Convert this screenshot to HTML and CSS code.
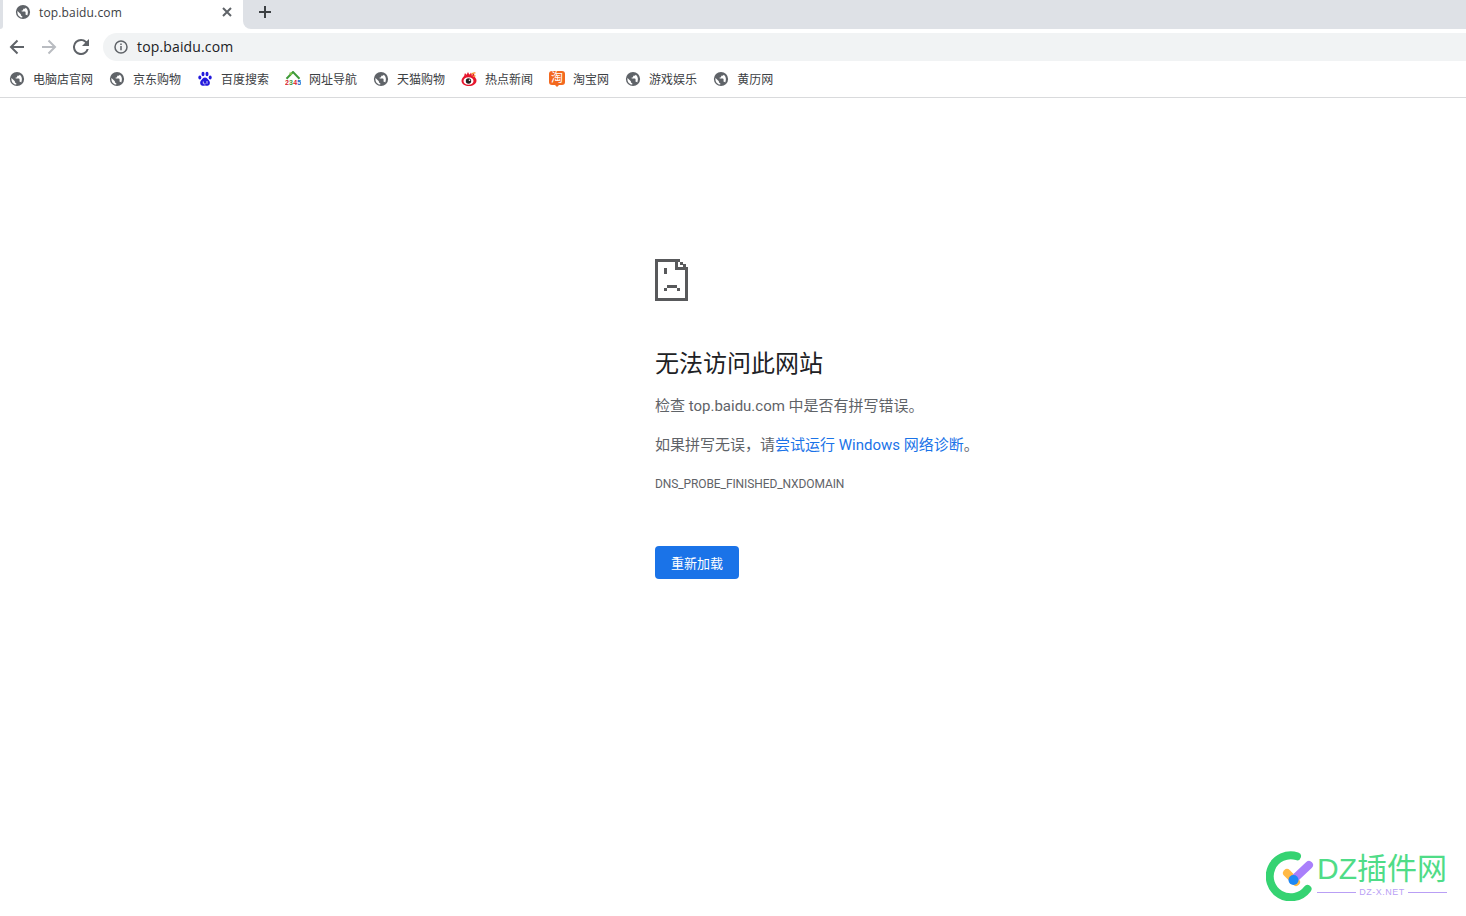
FILE: index.html
```html
<!DOCTYPE html>
<html lang="zh-CN">
<head>
<meta charset="UTF-8">
<meta name="viewport" content="width=device-width, initial-scale=1.0">
<title>top.baidu.com</title>
<link rel="stylesheet" href="styles.css">
</head>
<body>

<svg class="defs" width="0" height="0" aria-hidden="true">
  <symbol id="globe" viewBox="-1 -1 18 18">
    <path fill="#5f6368" fill-rule="evenodd" d="M8 0a8 8 0 1 0 0 16A8 8 0 0 0 8 0zM1.800 6.800L5.600 10.400v.8c0 .9.700 1.600 1.600 1.600v1.500C4.200 14 1.700 11.500 1.700 8.200c0-.5 0-1 .1-1.400zM12.800 11.800c-.4-.5-.9-.8-1.500-.8h-.4V8.600c0-.6-.5-1.100-1.100-1.100H6.500V6.400h.6c.6 0 1.100-.5 1.100-1.100V4.400h1c.8 0 1.500-.5 1.800-1.300 1.500 1 2.500 2.800 2.500 4.900 0 1.400-.3 2.700-.7 3.800z"/>
  </symbol>
</svg>

<!-- Browser chrome -->
<header class="chrome">
  <div class="tabstrip">
    <div class="strip-edge"></div>
    <div class="tab">
      <svg class="icon16"><use href="#globe"/></svg>
      <span class="tab-title">top.baidu.com</span>
      <svg class="tab-close" width="10" height="10" viewBox="0 0 10 10">
        <path d="M1 1l8 8M9 1L1 9" stroke="#5f6368" stroke-width="2" fill="none"/>
      </svg>
    </div>
    <div class="strip-rest">
      <svg class="new-tab" width="12" height="12" viewBox="0 0 12 12">
        <path d="M6 0v12M0 6h12" stroke="#3c4043" stroke-width="2" fill="none"/>
      </svg>
    </div>
  </div>

  <div class="toolbar">
    <div class="nav-btn">
      <svg width="16" height="16" viewBox="0 0 16 16">
        <path d="M15 8H2.500M8.500 1.500L2 8l6.500 6.500" stroke="#5f6368" stroke-width="2" fill="none"/>
      </svg>
    </div>
    <div class="nav-btn">
      <svg width="16" height="16" viewBox="0 0 16 16">
        <path d="M1 8h12.500M7.500 1.500L14 8l-6.500 6.500" stroke="#b9bcc1" stroke-width="2" fill="none"/>
      </svg>
    </div>
    <div class="nav-btn">
      <svg width="16" height="16" viewBox="0 0 16 16">
        <path d="M13.650 2.350A7.950 7.950 0 0 0 8 0a8 8 0 1 0 7.740 10h-2.080A6 6 0 1 1 8 2c1.660 0 3.140.69 4.220 1.780L9 7h7V0l-2.350 2.350z" fill="#5f6368"/>
      </svg>
    </div>
    <div class="omnibox">
      <svg class="info" width="14" height="14" viewBox="0 0 14 14">
        <circle cx="7" cy="7" r="6" stroke="#5f6368" stroke-width="1.500" fill="none"/>
        <path d="M6.250 6h1.500v4.300h-1.500zM6.250 3.500h1.500V5h-1.500z" fill="#5f6368"/>
      </svg>
      <span class="url">top.baidu.com</span>
    </div>
  </div>

  <nav class="bookmarks">
    <a class="bookmark"><svg class="icon16"><use href="#globe"/></svg>电脑店官网</a>
    <a class="bookmark"><svg class="icon16"><use href="#globe"/></svg>京东购物</a>
    <a class="bookmark">
      <svg class="icon16" viewBox="0 0 16 16">
        <g fill="#2319dc">
          <ellipse cx="2.800" cy="6.500" rx="1.500" ry="2"/>
          <ellipse cx="6" cy="3" rx="1.500" ry="2.200"/>
          <ellipse cx="10" cy="3" rx="1.500" ry="2.200"/>
          <ellipse cx="13.200" cy="6.500" rx="1.500" ry="2"/>
          <path d="M8 6.500c2 0 2.700 1.700 4 3 1.500 1.500 1.200 5-1.500 5.300-1 .1-1.700-.4-2.500-.4s-1.500.5-2.500.4C3 14.500 2.500 11 4 9.500c1.300-1.300 2-3 4-3z"/>
        </g>
        <path d="M6.300 10.500v1.800c0 .8 1.900.8 2.300.5M10 10v2.800" stroke="#fff" stroke-width=".8" fill="none"/>
      </svg>
      百度搜索
    </a>
    <a class="bookmark">
      <svg class="icon16" viewBox="0 0 16 16">
        <path d="M1.500 7.700L8 1l6.500 6.700" stroke="#3f9a3a" stroke-width="2" fill="none"/>
        <path d="M4.500 1.500h2.500V4H4.500z" fill="#7cc242"/>
        <text class="digits" x="0" y="14"><tspan fill="#d8232a">2</tspan><tspan fill="#3f9a3a">3</tspan><tspan fill="#d8232a">4</tspan><tspan fill="#1668c7">5</tspan></text>
      </svg>
      网址导航
    </a>
    <a class="bookmark"><svg class="icon16"><use href="#globe"/></svg>天猫购物</a>
    <a class="bookmark">
      <svg class="icon16" viewBox="0 0 16 16">
        <path d="M.5 10C.5 7 3.500 3.500 7 3.500c3.800 0 8.500 2.500 8.500 6.200 0 3-3.600 5.300-7.500 5.300S.5 13 .5 10z" fill="#e6162d"/>
        <ellipse cx="7.500" cy="10" rx="5" ry="3.800" fill="#fff"/>
        <circle cx="7.500" cy="10" r="2.700" fill="#222"/>
        <circle cx="8.500" cy="9.200" r=".8" fill="#fff"/>
        <path d="M3 5l1-3 1.500 2L7 1l1.500 3L10 1.500 11 4l2-2 .5 4-3-2H5z" fill="#e6162d"/>
        <path d="M10.500 3.500c.8-1.200 2.400-1.800 4-1.500M12 6c.4-.8 1.200-1.300 2.500-1.200" stroke="#f7941d" stroke-width="1.200" fill="none"/>
      </svg>
      热点新闻
    </a>
    <a class="bookmark">
      <span class="taobao">淘</span>
      淘宝网
    </a>
    <a class="bookmark"><svg class="icon16"><use href="#globe"/></svg>游戏娱乐</a>
    <a class="bookmark"><svg class="icon16"><use href="#globe"/></svg>黄历网</a>
  </nav>
</header>

<!-- Error page -->
<main class="error-page">
  <svg class="sad-page" width="33" height="42" viewBox="0 0 33 42" shape-rendering="crispEdges">
    <g fill="#58595b">
      <rect x="0" y="0" width="3" height="42"/>
      <rect x="0" y="39" width="33" height="3"/>
      <rect x="30" y="8" width="3" height="34"/>
      <rect x="0" y="0" width="25" height="3"/>
      <rect x="20" y="0" width="3" height="11"/>
      <rect x="20" y="8" width="13" height="3"/>
      <rect x="25" y="3" width="3" height="3"/>
      <rect x="28" y="5" width="3" height="3"/>
      <rect x="9" y="9" width="3" height="6"/>
      <rect x="12" y="26" width="10" height="3"/>
      <rect x="9" y="29" width="3" height="3"/>
      <rect x="22" y="29" width="3" height="3"/>
    </g>
  </svg>
  <h1>无法访问此网站</h1>
  <p>检查 top.baidu.com 中是否有拼写错误。</p>
  <p>如果拼写无误，请<a href="#" class="link">尝试运行 Windows 网络诊断</a>。</p>
  <div class="error-code">DNS_PROBE_FINISHED_NXDOMAIN</div>
  <button class="reload">重新加载</button>
</main>

<!-- Watermark -->
<div class="watermark">
  <svg width="50" height="50" viewBox="0 0 50 50">
    <path d="M31 5.300A21 21 0 1 0 41.500 38" stroke="#35d372" stroke-width="8" stroke-linecap="round" fill="none"/>
    <path d="M21 22l9 9" stroke="#ffb945" stroke-width="8" stroke-linecap="round"/>
    <path d="M27 29L43 14" stroke="#a97ffb" stroke-width="8" stroke-linecap="round"/>
    <circle cx="27.500" cy="29" r="5" fill="#1e88f5"/>
  </svg>
  <div class="wm-text">
    <div class="wm-name">DZ插件网</div>
    <div class="wm-sub"><span class="wm-line"></span>DZ-X.NET<span class="wm-line"></span></div>
  </div>
</div>

</body>
</html>
```

FILE: styles.css
```css
/* General Styles */
body {
  font-family: "Open Sans", "Noto Sans CJK SC", sans-serif;
  margin: 0;
  padding: 0;
  background-color: #fff;
  height: 916px;
  overflow: hidden;
  position: relative;
}

.defs {
  position: absolute;
}

.icon16 {
  width: 16px;
  height: 16px;
  flex: none;
}

/* Browser chrome */
.chrome {
  border-bottom: 1px solid #d9dadc;
}

.tabstrip {
  display: flex;
  height: 29px;
}

.strip-edge {
  width: 3px;
  background-color: #dee1e6;
  border-bottom-right-radius: 6px;
}

.tab {
  width: 240px;
  display: flex;
  align-items: center;
  padding: 0 11px 5px 12px;
  box-sizing: border-box;
}

.tab-title {
  flex: 1;
  margin-left: 8px;
  font-size: 12px;
  letter-spacing: .15px;
  color: #3c4043;
}

.strip-rest {
  flex: 1;
  display: flex;
  align-items: center;
  padding: 0 0 5px 16px;
  background-color: #dee1e6;
  border-bottom-left-radius: 8px;
}

/* Toolbar */
.toolbar {
  display: flex;
  align-items: center;
  height: 35px;
  padding: 4px 0 3px 1px;
  box-sizing: border-box;
}

.nav-btn {
  width: 32px;
  height: 28px;
  display: flex;
  align-items: center;
  justify-content: center;
}

.omnibox {
  flex: 1;
  height: 28px;
  margin-left: 6px;
  padding-left: 11px;
  display: flex;
  align-items: center;
  background-color: #f1f3f4;
  border-radius: 14px 0 0 14px;
}

.url {
  margin-left: 9px;
  padding-bottom: 2px;
  font-size: 14px;
  letter-spacing: .15px;
  color: #202124;
}

/* Bookmarks */
.bookmarks {
  display: flex;
  height: 30px;
  padding: 0 0 3px 1px;
}

.bookmark {
  display: flex;
  align-items: center;
  gap: 8px;
  padding: 0 8px;
  font-size: 12px;
  color: #3c4043;
  white-space: nowrap;
}

.digits {
  font-family: "Liberation Sans", sans-serif;
  font-size: 7px;
  font-weight: bold;
  letter-spacing: .2px;
}

.taobao {
  position: relative;
  width: 16px;
  height: 14px;
  margin-bottom: 2px;
  flex: none;
  border-radius: 3px;
  background-color: #f3691f;
  color: #fff;
  font-size: 12px;
  line-height: 14px;
  text-align: center;
}

.taobao::after {
  content: "";
  position: absolute;
  left: 6px;
  top: 14px;
  border: 2px solid transparent;
  border-top-color: #f3691f;
}

/* Error page */
.error-page {
  margin-left: 655px;
  padding-top: 161px;
  width: 500px;
  font-family: Roboto, "Noto Sans CJK SC", sans-serif;
}

.sad-page {
  display: block;
}

h1 {
  margin: 46px 0 0;
  font-size: 24px;
  font-weight: 400;
  line-height: 34px;
  color: #202124;
}

p {
  margin: 13px 0 0;
  font-size: 15px;
  line-height: 24px;
  color: #5f6368;
}

p + p {
  margin-top: 15px;
}

.link {
  color: #1a73e8;
  text-decoration: none;
}

.error-code {
  margin-top: 19px;
  font-size: 12px;
  line-height: 16px;
  letter-spacing: -.1px;
  color: #5f6368;
}

.reload {
  display: block;
  margin-top: 54px;
  padding: 0 16px;
  height: 33px;
  border: none;
  border-radius: 4px;
  background-color: #1a73e8;
  color: #fff;
  font-family: inherit;
  font-size: 13px;
  cursor: pointer;
}

/* Watermark */
.watermark {
  position: absolute;
  left: 1266px;
  top: 851px;
  display: flex;
  gap: 1px;
  font-family: "Liberation Sans", "Noto Sans CJK SC", sans-serif;
}

.wm-name {
  font-size: 30px;
  line-height: 36px;
  color: #4fdc87;
}

.wm-sub {
  display: flex;
  align-items: center;
  gap: 3px;
  font-size: 9px;
  line-height: 11px;
  letter-spacing: .5px;
  color: #b99ff5;
}

.wm-line {
  flex: 1;
  height: 1px;
  background-color: #b99ff5;
}
```
